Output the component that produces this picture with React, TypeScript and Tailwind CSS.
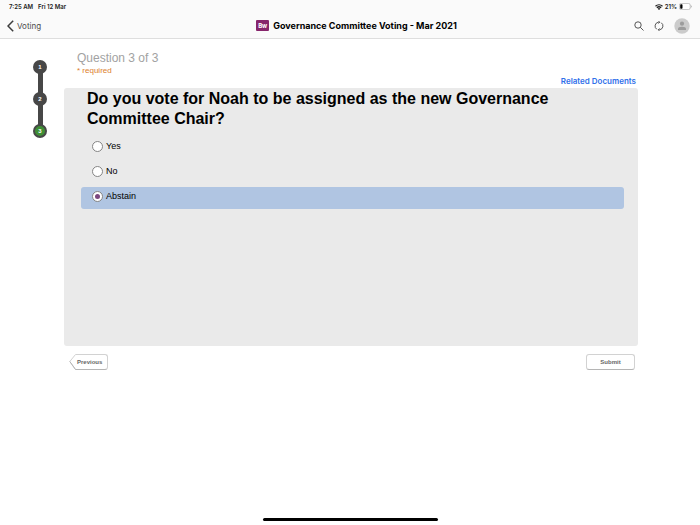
import { useState } from "react";

const options = ["Yes", "No", "Abstain"];

function StatusBar() {
  return (
    <div className="flex h-[13px] items-center justify-between pr-2 pl-[9px] text-[6px] leading-[13px] font-semibold text-[#222222]">
      <div className="flex gap-[5px]">
        <span>7:25 AM</span>
        <span>Fri 12 Mar</span>
      </div>
      <div className="flex items-center gap-[2px]">
        <svg className="h-[6px] w-2" viewBox="0 0 16 12" fill="none" stroke="#222" strokeWidth="2.6" aria-hidden="true">
          <path d="M1 4.6a10 10 0 0 1 14 0M3.7 7.5a6.2 6.2 0 0 1 8.6 0" />
          <path d="M8 12 5.3 9.3a4 4 0 0 1 5.4 0Z" fill="#222" stroke="none" />
        </svg>
        <span>21%</span>
        <svg className="h-[7px] w-[13px]" viewBox="0 0 13 7" aria-hidden="true">
          <rect x=".4" y=".4" width="10.8" height="6.2" rx="1.8" fill="white" stroke="#aaa" strokeWidth=".7" />
          <rect x="1.2" y="1.2" width="2.3" height="4.6" rx=".8" fill="#000" />
          <path d="M12 2.5q1 1 0 2" fill="none" stroke="#999" strokeWidth=".7" />
        </svg>
      </div>
    </div>
  );
}

function NavBar() {
  return (
    <nav className="grid h-[25px] grid-cols-[1fr_auto_1fr] items-center pr-[10px] pl-[7px]">
      <button type="button" className="flex items-center gap-[3px] justify-self-start text-[8px] leading-3 text-[#4a4a4a]">
        <svg className="h-3 w-[7px]" viewBox="0 0 7 12" fill="none" stroke="#3c3c3c" strokeWidth="1.5" aria-hidden="true">
          <path d="M6.2.8 1 6l5.2 5.2" />
        </svg>
        Voting
      </button>
      <div className="flex items-center gap-1 pl-4">
        <span className="flex h-[11px] w-[13px] items-center justify-center rounded-[1px] bg-[#86246b] text-[6px] leading-none font-bold text-white">
          Bw
        </span>
        <h1 className="text-[9px] leading-3 font-bold text-black">Governance Committee Voting - Mar 2021</h1>
      </div>
      <div className="flex items-center gap-[10px] justify-self-end">
        <button type="button" aria-label="Search">
          <svg className="size-[10px]" viewBox="0 0 10 10" fill="none" stroke="#444" strokeWidth=".9" aria-hidden="true">
            <circle cx="4" cy="4" r="3.2" />
            <path d="m6.3 6.3 3.2 3.2" />
          </svg>
        </button>
        <button type="button" aria-label="Refresh">
          <svg className="size-[10px]" viewBox="0 0 10 10" fill="none" stroke="#444" strokeWidth=".9" aria-hidden="true">
            <path d="M2.8 8.3A3.9 3.9 0 0 1 4.4 1.2h1M7.2 1.7a3.9 3.9 0 0 1-1.6 7.1h-1" />
            <path d="M4.4 0l1.4 1.2-1.4 1.3M5.6 7.5 4.2 8.8l1.4 1.2" />
          </svg>
        </button>
        <button type="button" aria-label="Profile">
          <svg className="size-4" viewBox="0 0 16 16" aria-hidden="true">
            <circle cx="8" cy="8" r="7.7" fill="#cbcbcb" />
            <circle cx="8" cy="5.7" r="2.1" fill="#9c9c9c" />
            <path d="M4 12v-1q0-2.3 4-2.3t4 2.3v1Z" fill="#9c9c9c" />
          </svg>
        </button>
      </div>
    </nav>
  );
}

function Steps() {
  return (
    <ol className="flex flex-col items-center pt-[21px]">
      {[1, 2, 3].map((step) => (
        <li key={step} className="flex flex-col items-center">
          {step > 1 && <span className="-my-px h-5 w-[5px] bg-[#474747]" />}
          <span
            className={
              step === 3
                ? "flex size-[14px] items-center justify-center rounded-full border-2 border-[#474747] bg-[#3f8f35] text-[6px] leading-none font-bold text-white"
                : "flex size-[14px] items-center justify-center rounded-full bg-[#474747] text-[6px] leading-none font-bold text-white"
            }
          >
            {step}
          </span>
        </li>
      ))}
    </ol>
  );
}

export default function App() {
  const [choice, setChoice] = useState("Abstain");

  return (
    <div className="flex min-h-screen flex-col bg-white font-['Liberation_Sans',Arial,sans-serif] text-black">
      <header className="border-b border-[#dedede] bg-[#fafafa] font-['Inter',sans-serif]">
        <StatusBar />
        <NavBar />
      </header>

      <div className="flex flex-1 pr-[62px] pl-[33px]">
        <Steps />
        <main className="ml-[17px] min-w-0 flex-1 pt-3">
          <div className="pl-[13px]">
            <h2 className="text-[12px] leading-[14px] text-[#a2a2a2]">Question 3 of 3</h2>
            <p className="text-[8px] leading-3 text-[#dc7e2c]">* required</p>
          </div>
          <div className="flex h-[11px] justify-end pr-[2px]">
            <a href="#documents" className="font-['Inter',sans-serif] text-[8px] leading-[9px] font-semibold text-[#2f6fea]">
              Related Documents
            </a>
          </div>

          <form onSubmit={(event) => event.preventDefault()}>
            <fieldset className="min-h-[258px] rounded-[3px] bg-[#eaeaea] pr-[14px] pl-[17px]">
              <legend className="float-left w-full px-[6px] pt-px text-[16px] leading-5 font-bold">
                Do you vote for Noah to be assigned as the new Governance Committee Chair?
              </legend>
              <div className="clear-both flex flex-col gap-[3px] pt-2">
                {options.map((option) => (
                  <label
                    key={option}
                    className="flex h-[22px] items-start rounded-[3px] pt-1 pl-[11px] text-[9px] leading-[10px] has-checked:bg-[#b0c5e2]"
                  >
                    <input
                      type="radio"
                      name="vote"
                      value={option}
                      checked={choice === option}
                      onChange={() => setChoice(option)}
                      className="mr-[3px] flex size-[11px] appearance-none items-center justify-center rounded-full border border-[#858585] bg-white before:size-[5px] before:rounded-full checked:before:bg-[#7b477f]"
                    />
                    {option}
                  </label>
                ))}
              </div>
            </fieldset>

            <div className="flex items-start justify-between pt-2 pr-[3px] pl-[5px] text-[6px] leading-none font-bold text-[#666666]">
              <button type="button" className="flex h-4">
                <svg className="h-4 w-2" viewBox="0 0 8 16" fill="white" aria-hidden="true">
                  <path d="M8 .5H6.5L.8 7.5l5.7 8H8" stroke="#d2d2d2" />
                  <path d="m.8 7.5 5.7 8H8" stroke="#b5b5b5" fill="none" />
                </svg>
                <span className="flex h-4 w-[31px] items-center rounded-r-[3px] border border-l-0 border-[#d2d2d2] border-b-[#b5b5b5]">
                  Previous
                </span>
              </button>
              <button
                type="submit"
                className="flex h-4 w-[49px] items-center justify-center rounded-[3px] border border-[#d2d2d2] border-b-[#b5b5b5]"
              >
                Submit
              </button>
            </div>
          </form>
        </main>
      </div>

      <footer className="flex justify-center pb-1">
        <div className="h-[3px] w-1/4 rounded-full bg-black" />
      </footer>
    </div>
  );
}
